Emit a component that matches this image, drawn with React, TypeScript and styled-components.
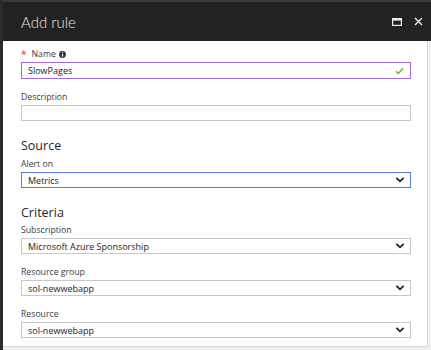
import React from "react";
import styled, { createGlobalStyle } from "styled-components";

const GlobalStyle = createGlobalStyle`
  html, body {
    margin: 0;
    padding: 0;
    background: #f0f0f0;
  }
  * {
    box-sizing: border-box;
  }
`;

const FONT = `"Segoe UI", "Open Sans", "Liberation Sans", sans-serif`;

const Blade = styled.div`
  width: 431px;
  height: 350px;
  display: flex;
  flex-direction: column;
  border-left: 3px solid #2b2b2b;
  font-family: ${FONT};
  overflow: hidden;
`;

const Header = styled.header`
  height: 41px;
  flex-shrink: 0;
  display: flex;
  align-items: center;
  justify-content: space-between;
  background: #222222;
  border-top: 2px solid #3a3a3a;
  padding: 0 8px 0 18px;
`;

const Title = styled.h1`
  margin: 0;
  font-family: Lato, "Open Sans", sans-serif;
  font-size: 15px;
  font-weight: 300;
  color: #e4e4e4;
`;

const Controls = styled.div`
  display: flex;
  align-items: center;
  gap: 12px;
`;

const BodyRow = styled.div`
  flex: 1;
  display: flex;
  padding: 0 3px 3px 0;
  background: #f0f0f0;
`;

const Panel = styled.main`
  flex: 1;
  background: #ffffff;
  border-right: 1px solid #d6d6d6;
  border-bottom: 1px solid #d6d6d6;
  padding: 7px 16px 0 18px;
`;

const Field = styled.div<{ $first?: boolean }>`
  margin-top: ${({ $first }) => ($first ? 0 : 12)}px;
`;

const Label = styled.label`
  display: flex;
  align-items: center;
  gap: 3px;
  height: 12px;
  margin-bottom: 2px;
  font-size: 8.7px;
  color: #3c3c3c;
`;

const Required = styled.span`
  color: #e0262f;
  font-size: 10px;
  margin-right: 2px;
  line-height: 1;
`;

const SectionTitle = styled.h2`
  margin: 17px 0 0;
  height: 16px;
  line-height: 16px;
  font-size: 12.5px;
  font-weight: 400;
  color: #262626;
`;

const SectionFirstLabel = styled.div<{ $gap: number }>`
  margin-top: ${({ $gap }) => $gap}px;
`;

const Box = styled.div<{ $border: string; $width?: number; $height: number }>`
  height: ${({ $height }) => $height}px;
  display: flex;
  align-items: center;
  justify-content: space-between;
  padding: 0 6px 0 6px;
  border: ${({ $width }) => $width ?? 1}px solid ${({ $border }) => $border};
  background: #ffffff;
  font-size: 9px;
  color: #222222;
`;

const Chevron = () => (
  <svg width="8" height="6" viewBox="0 0 8 6">
    <polyline
      points="1,1.5 4,4.3 7,1.5"
      fill="none"
      stroke="#222"
      strokeWidth="1.8"
      strokeLinecap="square"
    />
  </svg>
);

const Check = () => (
  <svg width="9" height="8" viewBox="0 0 9 8">
    <polyline
      points="1,4.2 3.4,6.5 8,1.2"
      fill="none"
      stroke="#6fb23a"
      strokeWidth="1.5"
    />
  </svg>
);

const Info = () => (
  <svg width="7" height="7" viewBox="0 0 7 7">
    <circle cx="3.5" cy="3.5" r="3.4" fill="#333" />
    <rect x="3" y="3" width="1.1" height="2.6" fill="#fff" />
    <rect x="3" y="1.3" width="1.1" height="1" fill="#fff" />
  </svg>
);

const Maximize = () => (
  <svg width="10" height="8" viewBox="0 0 10 8">
    <rect x="0.6" y="0.6" width="8.8" height="6.8" fill="none" stroke="#eee" strokeWidth="1.2" />
    <rect x="0.6" y="0.6" width="8.8" height="2" fill="#eee" />
  </svg>
);

const Close = () => (
  <svg width="9" height="9" viewBox="0 0 9 9">
    <path d="M1 1 L8 8 M8 1 L1 8" stroke="#eee" strokeWidth="1.4" />
  </svg>
);

type SelectProps = { label: string; value: string; border?: string; first?: boolean };

const SelectField = ({ label, value, border = "#c8c8c8", first }: SelectProps) => (
  <Field $first={first}>
    <Label>{label}</Label>
    <Box $border={border} $height={16}>
      <span>{value}</span>
      <Chevron />
    </Box>
  </Field>
);

export default function App() {
  return (
    <>
      <GlobalStyle />
      <Blade>
        <Header>
          <Title>Add rule</Title>
          <Controls>
            <Maximize />
            <Close />
          </Controls>
        </Header>
        <BodyRow>
          <Panel>
            <Field $first>
              <Label>
                <Required>*</Required>Name <Info />
              </Label>
              <Box $border="#a46ccb" $width={1.5} $height={17}>
                <span>SlowPages</span>
                <Check />
              </Box>
            </Field>
            <Field>
              <Label>Description</Label>
              <Box $border="#c8c8c8" $height={16} />
            </Field>

            <SectionTitle>Source</SectionTitle>
            <SectionFirstLabel $gap={4}>
              <SelectField first label="Alert on" value="Metrics" border="#5b7fd6" />
            </SectionFirstLabel>

            <SectionTitle>Criteria</SectionTitle>
            <SectionFirstLabel $gap={3}>
              <SelectField first label="Subscription" value="Microsoft Azure Sponsorship" />
            </SectionFirstLabel>
            <SelectField label="Resource group" value="sol-newwebapp" />
            <SelectField label="Resource" value="sol-newwebapp" />
          </Panel>
        </BodyRow>
      </Blade>
    </>
  );
}
